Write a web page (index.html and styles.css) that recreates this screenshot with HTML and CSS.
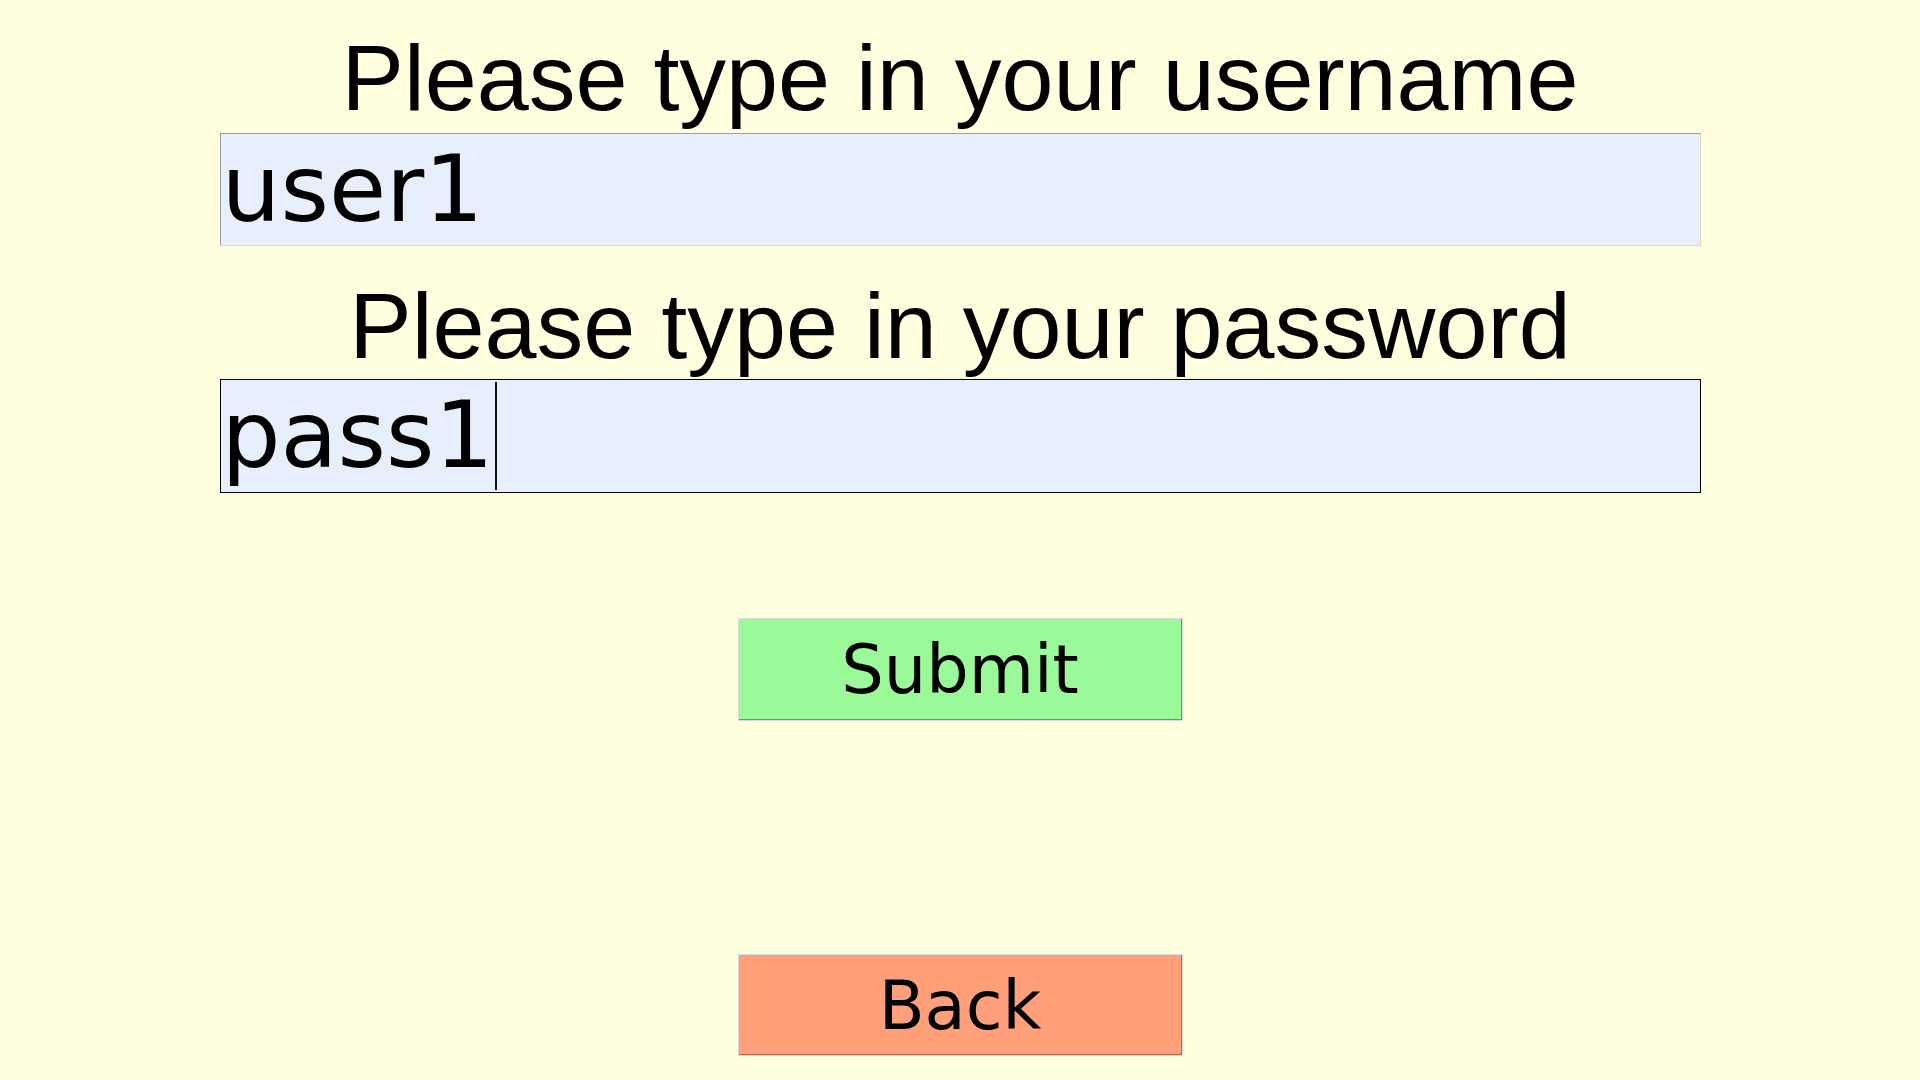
FILE: index.html
```html
<!DOCTYPE html>
<html lang="en">
<head>
<meta charset="utf-8">
<title>Login</title>
<link rel="stylesheet" href="styles.css">
</head>
<body>
<main class="screen">
  <div class="label label-user">Please type in your username</div>
  <div class="field field-user"><span class="field-text">user1</span></div>
  <div class="label label-pass">Please type in your password</div>
  <div class="field field-pass focused"><span class="field-text">pass1</span><span class="caret"></span></div>
  <button class="btn btn-submit" type="button">Submit</button>
  <button class="btn btn-back" type="button">Back</button>
</main>
</body>
</html>
```
FILE: styles.css
```css
html, body {
  margin: 0;
  padding: 0;
  background: #ffffe0;
  width: 1920px;
  height: 1080px;
  overflow: hidden;
}

.screen {
  display: flex;
  flex-direction: column;
  align-items: center;
  width: 1920px;
  height: 1080px;
}

.label {
  font-family: "Liberation Sans", Arial, sans-serif;
  font-size: 93.5px;
  line-height: 93px;
  height: 93px;
  color: #000;
  text-align: center;
  white-space: nowrap;
}

.label-user {
  margin-top: 31px;
  margin-bottom: 9px;
}

.label-pass {
  margin-top: 33px;
  margin-bottom: 7px;
}

.field {
  box-sizing: border-box;
  width: 1481px;
  height: 113px;
  background: #e7eefc;
  border: 1px solid #d4d6d8;
  border-top-color: #9c9ea2;
  border-left-color: #9c9ea2;
  padding-left: 1px;
  display: flex;
  align-items: flex-start;
  font-family: "DejaVu Sans", sans-serif;
  font-size: 93px;
  line-height: 111px;
  color: #000;
  white-space: nowrap;
}

.field.focused {
  border: 1px solid #000;
  height: 114px;
}

.field-text {
  display: block;
}

.caret {
  display: block;
  width: 2px;
  height: 108px;
  margin-top: 2px;
  margin-left: 1px;
  background: #111;
}

.btn {
  box-sizing: border-box;
  width: 445px;
  height: 103px;
  padding: 0;
  font-family: "DejaVu Sans", sans-serif;
  font-size: 67px;
  line-height: 103px;
  color: #000;
  border: 1px solid #d9dcd6;
  cursor: pointer;
}

.btn-submit {
  margin-top: 125px;
  background: #9afa9a;
  box-shadow: inset -1px -1px 0 #62a062;
}

.btn-back {
  margin-top: 233px;
  height: 102px;
  background: #ffa07a;
  box-shadow: inset -1px -1px 0 #b8684c;
}
```
